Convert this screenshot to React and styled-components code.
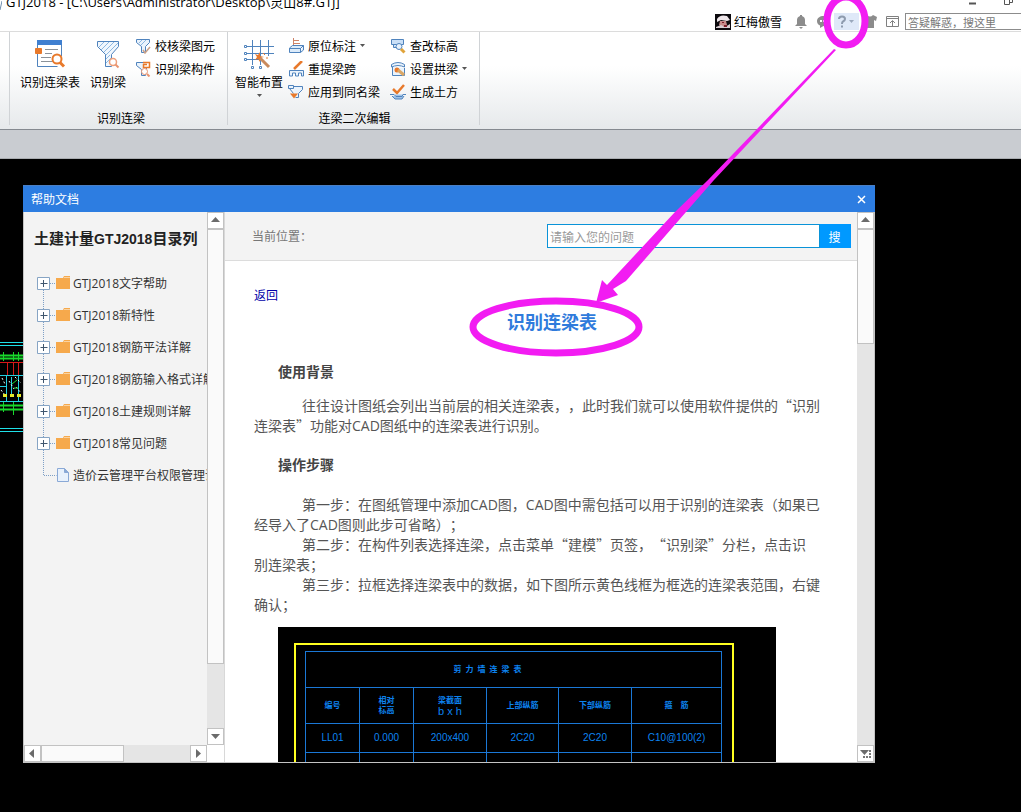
import React from "react";
import styled, { createGlobalStyle, css } from "styled-components";

const cjk = '"Noto Sans CJK SC", sans-serif';
const ui = '"Open Sans", "Noto Sans CJK SC", sans-serif';

const GlobalStyle = createGlobalStyle`
  * { box-sizing: border-box; }
  html, body { margin: 0; padding: 0; }
  body { background: #000; overflow: hidden; }
  button, input { font-family: inherit; padding: 0; border: 0; background: none; border-radius: 0; }
  svg { display: block; flex: none; }
`;

const Page = styled.div`
  position: relative;
  display: flex;
  flex-direction: column;
  height: 100vh;
  overflow: hidden;
  font: 12px/14px ${cjk};
  color: #000;
`;

/* ---------- application title bar ---------- */

const TopBar = styled.header`
  display: flex;
  justify-content: space-between;
  flex: none;
  height: 32px;
  background: #fff;
  border-bottom: 1px solid #dcdcdc;
`;

const FileTitle = styled.div`
  display: flex;
  align-items: flex-end;
  gap: 4px;
  height: 10px;
  overflow: hidden;
  font: 13px/16px ${ui};
  white-space: pre;
`;

const TopRight = styled.div`
  display: flex;
  flex-direction: column;
  flex: none;
`;

const WindowControls = styled.div`
  display: flex;
  justify-content: flex-end;
  gap: 28px;
  height: 13px;
  padding-right: 8px;
`;

const UserRow = styled.div`
  display: flex;
  align-items: center;
  height: 17px;
`;

const UserName = styled.span`
  margin: 0 8px 0 3px;
`;

const ToolButton = styled.button`
  display: flex;
  align-items: center;
  justify-content: center;
  width: ${(p) => (p.$active ? 25 : 22)}px;
  height: 17px;
  color: #8c8c8c;
  ${(p) => p.$active && css`background: #dfe9f8;`}
`;

const QuickSearch = styled.input`
  width: 116px;
  height: 17px;
  margin-left: 2px;
  padding-left: 2px;
  border: 1px solid #8c8c8c;
  border-right: 0;
  background: #fff;
  font-size: 11px;
  &::placeholder { color: #777; opacity: 1; }
`;

/* ---------- ribbon ---------- */

const Ribbon = styled.nav`
  display: flex;
  flex: none;
  height: 98px;
  background: linear-gradient(#fff 35%, #e6e9eb);
  border-bottom: 1px solid #858a90;
`;

const RibbonEdge = styled.div`
  width: 10px;
  margin-bottom: 4px;
  border-right: 1px solid #d0d3d6;
`;

const RibbonGroup = styled.section`
  display: flex;
  flex-direction: column;
  margin-bottom: 4px;
  padding: 2px 12px 0 ${(p) => (p.$tight ? 6 : 9)}px;
  border-right: 1px solid #d0d3d6;
`;

const GroupTools = styled.div`
  display: flex;
  gap: ${(p) => (p.$tight ? 4 : 8)}px;
  height: 73px;
`;

const GroupLabel = styled.div`
  margin-top: 4px;
  padding-left: 8px;
  text-align: center;
`;

const BigButton = styled.button`
  display: flex;
  flex-direction: column;
  align-items: center;
  gap: 5px;
  padding: 4px 1px 0;
  font-size: 12px;
  line-height: 14px;
  white-space: nowrap;
`;

const SmallColumn = styled.div`
  display: flex;
  flex-direction: column;
  align-items: flex-start;
  margin-right: ${(p) => (p.$spaced ? 6 : 0)}px;
`;

const SmallButton = styled.button`
  display: flex;
  align-items: center;
  gap: 4px;
  height: 23px;
  font-size: 12px;
  line-height: 14px;
  white-space: nowrap;
`;

const Strip = styled.div`
  flex: none;
  height: 29px;
  background: #c9ccd1;
  border-bottom: 1px solid #a9acb0;
`;

/* ---------- drawing canvas and help window ---------- */

const Canvas = styled.main`
  position: relative;
  display: flex;
  flex: 1;
  min-height: 0;
  padding: 26px 146px 49px 23px;
  background: #000;
`;

const Drawing = styled.svg`
  position: absolute;
  left: 0;
  top: 181px;
`;

const Dialog = styled.section`
  position: relative;
  display: flex;
  flex-direction: column;
  flex: 1;
  min-width: 0;
  background: #fff;
`;

const DialogBar = styled.div`
  display: flex;
  align-items: center;
  justify-content: space-between;
  flex: none;
  height: 27px;
  padding: 0 9px 0 8px;
  background: #2d7de1;
  border-top: 1px solid #4a7fc4;
  color: #fff;
`;

const CloseButton = styled.button`
  color: #fff;
`;

const DialogBody = styled.div`
  display: flex;
  flex: 1;
  min-height: 0;
  border: 1px solid #c4c4c4;
  border-top: 0;
`;

const Side = styled.aside`
  display: grid;
  grid-template-columns: 183px 17px;
  grid-template-rows: minmax(0, 1fr) 17px;
  flex: none;
  background: #fff;
  border-right: 1px solid #d8d8d8;
`;

const SideContent = styled.div`
  overflow: hidden;
  padding: 17px 0 0 10px;
  background: #f3f3f3;
  white-space: nowrap;
`;

const SideTitle = styled.h2`
  margin: 0 0 19px;
  font: bold 15px/20px "Liberation Sans", ${cjk};
  color: #222;
`;

const Latin = styled.span`
  font-family: "Liberation Sans", sans-serif;
  font-size: 14px;
`;

const Tree = styled.ul`
  margin: 0;
  padding: 0 0 0 3px;
  list-style: none;
`;

const TreeItem = styled.li`
  display: flex;
  align-items: center;
  gap: 3px;
  height: 32px;
  font-family: ${ui};
  color: #333;
`;

const ScrollTrack = styled.div`
  display: flex;
  flex-direction: ${(p) => (p.$horizontal ? "row" : "column")};
  flex: none;
  min-width: 17px;
  background: #e5e5e5;
`;

const ScrollButton = styled.button`
  display: flex;
  align-items: center;
  justify-content: center;
  flex: none;
  width: 17px;
  height: 17px;
  background: #fff;
  border: 1px solid #c2c2c2;
`;

const Thumb = styled.div`
  flex: ${(p) => p.$size} 1 0;
  background: #fafafa;
  border: 1px solid #c2c2c2;
`;

const Rest = styled.div`
  flex: ${(p) => p.$size} 1 0;
`;

const Reader = styled.div`
  display: flex;
  flex-direction: column;
  flex: 1;
  min-width: 0;
  overflow: hidden;
`;

const ReaderBar = styled.div`
  display: flex;
  align-items: center;
  justify-content: space-between;
  flex: none;
  height: 49px;
  padding: 0 6px 0 27px;
  background: #f3f3f3;
  border-bottom: 1px solid #dcdcdc;
  color: #777;
`;

const SearchForm = styled.form`
  display: flex;
  flex: none;
  width: 304px;
  height: 24px;
`;

const SearchInput = styled.input`
  flex: 1;
  min-width: 0;
  padding-left: 2px;
  background: #fff;
  border: 1px solid #0a93d8;
  font-size: 12px;
  &::placeholder { color: #999; opacity: 1; }
`;

const SearchButton = styled.button`
  width: 31px;
  padding-right: 2px;
  background: #0099ff;
  color: #fff;
  font-size: 12px;
`;

const Article = styled.article`
  flex: 1;
  min-height: 0;
  overflow: hidden;
  padding: 24px 7px 0 29px;
  font: 14px/20px ${cjk};
  text-spacing-trim: space-all;
  color: #555;
`;

const BackLink = styled.a`
  display: block;
  font-size: 12px;
  color: #0000a8;
  text-decoration: none;
`;

const ArticleTitle = styled.h1`
  margin: 0;
  font-size: 18px;
  line-height: 32px;
  text-align: center;
  color: #2f7bdc;
`;

const Heading = styled.h2`
  margin: ${(p) => (p.$first ? "24px 0 14px" : "19px 0 20px")};
  padding-left: 24px;
  font-size: 14px;
  line-height: 20px;
  color: #444;
`;

const Paragraph = styled.p`
  margin: 0;
  padding-right: 24px;
  text-indent: 48px;
`;

const Roman = styled.span`
  font-family: "Open Sans", sans-serif;
  line-height: 1;
`;

/* ---------- CAD picture inside the article ---------- */

const Figure = styled.figure`
  width: 498px;
  margin: 13px 0 0 24px;
  padding: 16px 42px 0 16px;
  background: #000;
`;

const Selection = styled.div`
  padding: 6px 12px 200px 9px;
  border: 2px solid #ffff20;
`;

const CadTable = styled.table`
  width: 417px;
  table-layout: fixed;
  border-collapse: collapse;
  color: #0d83f0;
  font: 10px/12px "Liberation Sans", ${cjk};
  text-align: center;

  td, th { padding: 0; border: 1px solid #1b78d6; font-weight: normal; }
  th { font-size: 8px; font-weight: bold; line-height: 10px; }
`;

const CadRow = styled.tr`
  height: ${(p) => (p.$tall ? 36 : 29)}px;
`;

const CadCaption = styled.div`
  padding-right: 52px;
`;

const CadLatin = styled.div`
  font-size: 11px;
  font-weight: normal;
`;

const Annotation = styled.svg`
  position: absolute;
  left: 0;
  top: 0;
  pointer-events: none;
`;

/* ---------- icons ---------- */

const BLUE = "#4f83bd";
const ORANGE = "#e8792b";

const Caret = () => (
  <svg width="5" height="3"><path d="M0 0h5L2.500 3z" fill="#555" /></svg>
);

const TableIcon = () => (
  <svg width="32" height="32" viewBox="0 0 32 32" fill="none">
    <path d="M3.500 4v24.500h20M27.500 4v14" stroke={BLUE} />
    <path d="M3 2h25v5H3z" fill="#3f7fd0" />
    <path d="M11 11.500h13M11 15.500h7M7 19.500h10M7 23.500h13" stroke="#8b9299" />
    <path d="M1.500 10.500h6v5h-6z" fill={ORANGE} stroke={ORANGE} />
    <circle cx="23" cy="21" r="4.500" stroke={ORANGE} strokeWidth="2" fill="#fff" />
    <path d="M26 24.500l4 4" stroke={ORANGE} strokeWidth="3" />
  </svg>
);

const FunnelIcon = () => (
  <svg width="32" height="32" viewBox="0 0 32 32" fill="none">
    <path d="M5.500 3.500h21v5l-7 8v12h-6v-12l-8-8z" fill="#f1f7fd" stroke={BLUE} />
    <path d="M7 9l5-5M9 12l8-8M12 14L22 4M14 17L26 5M14 21l4-4M14 25l5-5" stroke="#8db8e2" />
    <circle cx="21" cy="24" r="3.500" fill="#fff" stroke="#eda07b" strokeWidth="1.500" />
    <path d="M23.500 26.500l3 3" stroke="#e99470" strokeWidth="2" />
  </svg>
);

const GridIcon = () => (
  <svg width="32" height="32" viewBox="0 0 32 32" fill="none">
    <path d="M9.500 2v25M17.500 2v25M25.500 2v16M4 8.500h27M4 15.500h27M4 21.500h12" stroke={BLUE} />
    <path d="M1.500 7.500h2v2h-2zM1.500 14.500h2v2h-2zM1.500 20.500h2v2h-2zM8.500 28.500h2v2h-2zM16.500 28.500h2v2h-2z" fill="#fff" stroke={BLUE} />
    <path d="M12 16l3 1 2-3 0 4 4 1-4 1 0 4-2-3-3 1 2-3z" fill={ORANGE} />
    <path d="M17 20l9 9" stroke="#c98a5c" strokeWidth="3" />
    <path d="M20 15l2 2M23 20h2" stroke={ORANGE} />
  </svg>
);

const funnel = <path d="M1.500 1.500h13v3l-4 4v6h-4v-6l-5-4z" fill="#eaf3fc" stroke={BLUE} />;

const smallIcons = {
  check: (<>{funnel}<path d="M4 5l3-3M6 7l5-5" stroke="#8db8e2" /><path d="M8 12l2 3 5-6" stroke="#c7a08a" strokeWidth="1.500" /></>),
  member: (<>{funnel}<path d="M8 1.500h6.500v5H8.500v-3H12" fill="#fff" stroke={ORANGE} strokeWidth="1.500" /><circle cx="9.500" cy="10.500" r="3" stroke="#e99470" fill="#fff" /><path d="M12 13l2.500 2.500" stroke="#e99470" strokeWidth="2" /></>),
  label: (<><path d="M1.500 10l3-2.500h11l-3 3h-11zM1.500 10.500h11v4h-11zM12.500 14.500l3-2.500V7.500" fill="#dcebfa" stroke={BLUE} /><path d="M5.500 7V0M5 2.500h6M5 5.500h7" stroke="#cf8468" /></>),
  span: (<><path d="M1.500 15V9.500h14V15h-2v-3h-3v3h-3v-3h-3v3z" fill="#eaf3fc" stroke={BLUE} /><path d="M6 8l8-8" stroke={ORANGE} strokeWidth="2.500" /></>),
  apply: (<><path d="M0.500 1.500h5v3h-5zM5.500 2.500h9v3l-4 4v4l-3 0M1.500 4.500l4 5" fill="#eaf3fc" stroke={BLUE} /><path d="M2 9.500h8l-4 5z" fill={ORANGE} /></>),
  level: (<><path d="M1.500 1.500h12v5h-12zM3.500 6.500v3l4 0" fill="#c9dff7" stroke={BLUE} /><circle cx="9" cy="8.500" r="3" fill="#e6f1fc" stroke={BLUE} /><path d="M11 11l3.500 3.500" stroke="#e0a33a" strokeWidth="3" /></>),
  arch: (<><path d="M1.500 6V3.500Q8 -0.500 14.500 3.500V6l-3-1Q8 4 4.500 5zM2.500 6v8.500h12V7" fill="#eaf3fc" stroke={BLUE} /><circle cx="7" cy="9" r="2.500" fill={ORANGE} /><path d="M8 9l6 5" stroke="#dba766" strokeWidth="3" /></>),
  earth: (<><path d="M3 5l4 4 7-8" stroke={ORANGE} strokeWidth="2.500" /><path d="M0 10.500h4l2 2h6l1-2h3M2 12l3 3h7l2-3" stroke={BLUE} fill="#9fc2e8" /></>),
};

const SmallIcon = ({ name }) => (
  <svg width="16" height="16" viewBox="0 0 16 16" fill="none">{smallIcons[name]}</svg>
);

const arrows = {
  up: "M0 6L4.500 1L9 6z",
  down: "M0 2L4.500 7L9 2z",
  left: "M6 0L1 4.500L6 9z",
  right: "M2 0L7 4.500L2 9z",
};

const Arrow = ({ dir }) => (
  <ScrollButton aria-label={dir}>
    <svg width="9" height="9"><path d={arrows[dir]} fill="#6b6b6b" /></svg>
  </ScrollButton>
);

const BranchIcon = ({ first }) => (
  <svg width="33" height="32" fill="none">
    <path d={first ? "M6.500 16v16M13 15.500h7" : "M6.500 0v32M13 15.500h7"} stroke="#7d9fc6" strokeDasharray="1 1" />
    <path d="M0.500 9.500h12v12h-12z" fill="#fff" stroke="#86a4c4" />
    <path d="M3.500 15.500h7M6.500 12v7" stroke="#3f566e" />
    <path d="M19 10h7l1-2h6v13H19z" fill="#f6a94c" />
    <path d="M27 9.500h6" stroke="#f9d3a3" />
  </svg>
);

const LeafIcon = () => (
  <svg width="33" height="32" fill="none">
    <path d="M6.500 0v15.500h13" stroke="#7d9fc6" strokeDasharray="1 1" />
    <path d="M20.500 8.500h7l4 4v9h-11z" fill="#e8f1fc" stroke="#8aa9d6" />
    <path d="M27.500 8.500v4h4" fill="#8aa9d6" stroke="#8aa9d6" />
  </svg>
);

const branches = [
  "GTJ2018文字帮助",
  "GTJ2018新特性",
  "GTJ2018钢筋平法详解",
  "GTJ2018钢筋输入格式详解",
  "GTJ2018土建规则详解",
  "GTJ2018常见问题",
];

const Tool = ({ icon, text, menu }) => (
  <SmallButton>
    <SmallIcon name={icon} />
    <span>{text}</span>
    {menu && <Caret />}
  </SmallButton>
);

export default function App() {
  return (
    <Page>
      <GlobalStyle />
      <TopBar>
        <FileTitle>
          <svg width="2" height="10"><path d="M0 10L2 1" stroke="#6f8fb0" /></svg>
          <span>{"GTJ2018 - [C:\\Users\\Administrator\\Desktop\\灵山8#.GTJ]"}</span>
        </FileTitle>
        <TopRight>
          <WindowControls>
            <svg width="7" height="6"><path d="M0 3.500h7" stroke="#555" strokeWidth="2" /></svg>
            <svg width="9" height="6" fill="none"><path d="M0.500 -1v5.500h5V-1M5.500 2.500h3V-1" stroke="#555" /></svg>
          </WindowControls>
          <UserRow>
            <svg width="16" height="16">
              <path d="M0 0h16v16H0z" fill="#0c0a0e" />
              <path d="M2 5Q5 0 12 2l3 4-3 1-6-1-4 2z" fill="#eee6ea" />
              <path d="M5 7h6l1 4-5 2-3-2z" fill="#c78b8b" />
              <path d="M1 13l5-2 4 2 5-3v4H1z" fill="#d9cdd3" />
              <path d="M7 8h2v1H7zM9 11h3v2H9z" fill="#7d1c2a" />
            </svg>
            <UserName>红梅傲雪</UserName>
            <ToolButton aria-label="通知">
              <svg width="12" height="14"><path d="M5 0h2v1q3 1 3 4v4l2 2H0l2-2V5q0-3 3-4zM4 12h4l-2 2z" fill="#8c8c8c" /></svg>
            </ToolButton>
            <ToolButton aria-label="消息">
              <svg width="13" height="12"><path d="M6.500 0C10 0 13 2 13 5s-3 5-6.500 5L3 12V9.500Q0 8 0 5c0-3 3-5 6.500-5z" fill="#8c8c8c" /><path d="M3 4h2v2H3zM6 4h2v2H6z" fill="#fff" /></svg>
            </ToolButton>
            <ToolButton $active aria-label="帮助">
              <svg width="19" height="14" fill="none">
                <path d="M2 4Q2 1.500 5 1.500T8 4Q8 5.500 6 6.500 5 7 5 9" stroke="#8e9bae" strokeWidth="2" />
                <path d="M4 10.500h2v2H4z" fill="#8e9bae" />
                <path d="M12 5h5l-2.500 3z" fill="#9aa8bc" />
              </svg>
            </ToolButton>
            <ToolButton aria-label="皮肤">
              <svg width="14" height="13"><path d="M4 0q3 3 6 0l4 2-1 4-2-1v8H3V5L1 6 0 2z" fill="#8c8c8c" /></svg>
            </ToolButton>
            <ToolButton aria-label="折叠">
              <svg width="13" height="11" fill="none"><path d="M0.500 0.500h12v10H0.500zM0 2.500h13M6.500 10V5M4 7l2.500-2.500L9 7" stroke="#808080" /></svg>
            </ToolButton>
            <QuickSearch aria-label="搜索" placeholder="答疑解惑，搜这里" />
          </UserRow>
        </TopRight>
      </TopBar>

      <Ribbon>
        <RibbonEdge />
        <RibbonGroup>
          <GroupTools>
            <BigButton><TableIcon />识别连梁表</BigButton>
            <BigButton><FunnelIcon />识别梁</BigButton>
            <SmallColumn>
              <Tool icon="check" text="校核梁图元" />
              <Tool icon="member" text="识别梁构件" />
            </SmallColumn>
          </GroupTools>
          <GroupLabel>识别连梁</GroupLabel>
        </RibbonGroup>
        <RibbonGroup $tight>
          <GroupTools $tight>
            <BigButton><GridIcon />智能布置<Caret /></BigButton>
            <SmallColumn $spaced>
              <Tool icon="label" text="原位标注" menu />
              <Tool icon="span" text="重提梁跨" />
              <Tool icon="apply" text="应用到同名梁" />
            </SmallColumn>
            <SmallColumn>
              <Tool icon="level" text="查改标高" />
              <Tool icon="arch" text="设置拱梁" menu />
              <Tool icon="earth" text="生成土方" />
            </SmallColumn>
          </GroupTools>
          <GroupLabel>连梁二次编辑</GroupLabel>
        </RibbonGroup>
      </Ribbon>
      <Strip />

      <Canvas>
        <Drawing width="23" height="94" fill="none">
          <path d="M0 2.500h23M0 5.500h23M0 88.500h23M0 91.500h23" stroke="#1fe0e8" />
          <path d="M0 15.500h23M0 18.500h23M0 65.500h23M0 69.500h23" stroke="#19d92c" strokeWidth="2" />
          <path d="M3.500 12v9M13.500 12v9M18.500 12v9M3.500 62v10M13.500 61v14" stroke="#19d92c" />
          <path d="M0 22.500h23M7.500 23v12M13.500 23v12M18.500 23v12" stroke="#d51818" />
          <path d="M0 35.500h23M0 61.500h23M0 46.500h6M6.500 35v26M11.500 37v20M18.500 36v25" stroke="#24cfe0" />
          <path d="M2 38l3 6M9 41l5 8M15 37l6 6M1 50l4 5M16 47l5 6" stroke="#e8ffff" strokeDasharray="2 2" />
          <path d="M3 55.500h4M10 55.500h4M17 55.500h4" stroke="#e5e829" strokeWidth="3" />
          <path d="M12 44l5-4M14 48h4" stroke="#19d92c" />
        </Drawing>

        <Dialog aria-label="帮助文档">
          <DialogBar>
            <span>帮助文档</span>
            <CloseButton aria-label="关闭">
              <svg width="9" height="9"><path d="M1 1l7 7M8 1L1 8" stroke="#fff" strokeWidth="1.500" /></svg>
            </CloseButton>
          </DialogBar>
          <DialogBody>
            <Side>
              <SideContent>
                <SideTitle>土建计量<Latin>GTJ2018</Latin>目录列</SideTitle>
                <Tree>
                  {branches.map((text, i) => (
                    <TreeItem key={text}><BranchIcon first={i === 0} />{text}</TreeItem>
                  ))}
                  <TreeItem><LeafIcon />造价云管理平台权限管理说明</TreeItem>
                </Tree>
              </SideContent>
              <ScrollTrack>
                <Arrow dir="up" />
                <Thumb $size={436} />
                <Rest $size={64} />
                <Arrow dir="down" />
              </ScrollTrack>
              <ScrollTrack $horizontal>
                <Arrow dir="left" />
                <Thumb $size={82} />
                <Rest $size={67} />
                <Arrow dir="right" />
              </ScrollTrack>
            </Side>

            <Reader>
              <ReaderBar>
                <span>当前位置：</span>
                <SearchForm onSubmit={(e) => e.preventDefault()}>
                  <SearchInput aria-label="问题" placeholder="请输入您的问题" />
                  <SearchButton>搜</SearchButton>
                </SearchForm>
              </ReaderBar>
              <Article lang="zh-CN">
                <BackLink href="#back">返回</BackLink>
                <ArticleTitle>识别连梁表</ArticleTitle>
                <Heading $first>使用背景</Heading>
                <Paragraph>
                  往往设计图纸会列出当前层的相关连梁表，，此时我们就可以使用软件提供的“识别连梁表”功能对<Roman>CAD</Roman>图纸中的连梁表进行识别。
                </Paragraph>
                <Heading>操作步骤</Heading>
                <Paragraph>
                  第一步：在图纸管理中添加<Roman>CAD</Roman>图，<Roman>CAD</Roman>图中需包括可以用于识别的连梁表（如果已经导入了<Roman>CAD</Roman>图则此步可省略）；
                </Paragraph>
                <Paragraph>
                  第二步：在构件列表选择连梁，点击菜单“建模”页签，“识别梁”分栏，点击识<br />别连梁表；
                </Paragraph>
                <Paragraph>
                  第三步：拉框选择连梁表中的数据，如下图所示黄色线框为框选的连梁表范围，右键确认；
                </Paragraph>
                <Figure>
                  <Selection>
                    <CadTable>
                      <colgroup>
                        <col width="54" /><col width="54" /><col width="73" />
                        <col width="72" /><col width="73" /><col width="90" />
                      </colgroup>
                      <tbody>
                        <CadRow $tall>
                          <th colSpan="6"><CadCaption>剪&ensp;力&ensp;墙&ensp;连&ensp;梁&ensp;表</CadCaption></th>
                        </CadRow>
                        <CadRow $tall>
                          <th>编号</th>
                          <th>相对<br />标高</th>
                          <th>梁截面<CadLatin>b x h</CadLatin></th>
                          <th>上部纵筋</th>
                          <th>下部纵筋</th>
                          <th>箍&emsp;筋</th>
                        </CadRow>
                        <CadRow>
                          <td>LL01</td><td>0.000</td><td>200x400</td>
                          <td>2C20</td><td>2C20</td><td>C10@100(2)</td>
                        </CadRow>
                        <CadRow><td /><td /><td /><td /><td /><td /></CadRow>
                      </tbody>
                    </CadTable>
                  </Selection>
                </Figure>
              </Article>
            </Reader>
            <ScrollTrack>
              <Arrow dir="up" />
              <Thumb $size={113} />
              <Rest $size={403} />
              <ScrollButton aria-label="resize">
                <svg width="11" height="9">
                  <path d="M0 1h9L4.500 6z" fill="#6b6b6b" />
                  <path d="M9 1h2v2H9zM9 4h2v2H9zM9 7h2v2H9zM6 7h2v2H6zM3 7h2v2H3z" fill="#777" />
                </svg>
              </ScrollButton>
            </ScrollTrack>
          </DialogBody>
        </Dialog>
      </Canvas>

      <Annotation width="1021" height="812" fill="none">
        <ellipse cx="846" cy="21" rx="19" ry="24" stroke="#f21cf2" strokeWidth="7" />
        <ellipse cx="556" cy="327" rx="83" ry="26" stroke="#f21cf2" strokeWidth="7" />
        <path d="M834 49L708 180L675 212L607 285L602 280L596 303L618 295L613 289L626 281L686 212L714 180L836 50z" fill="#f21cf2" />
      </Annotation>
    </Page>
  );
}
